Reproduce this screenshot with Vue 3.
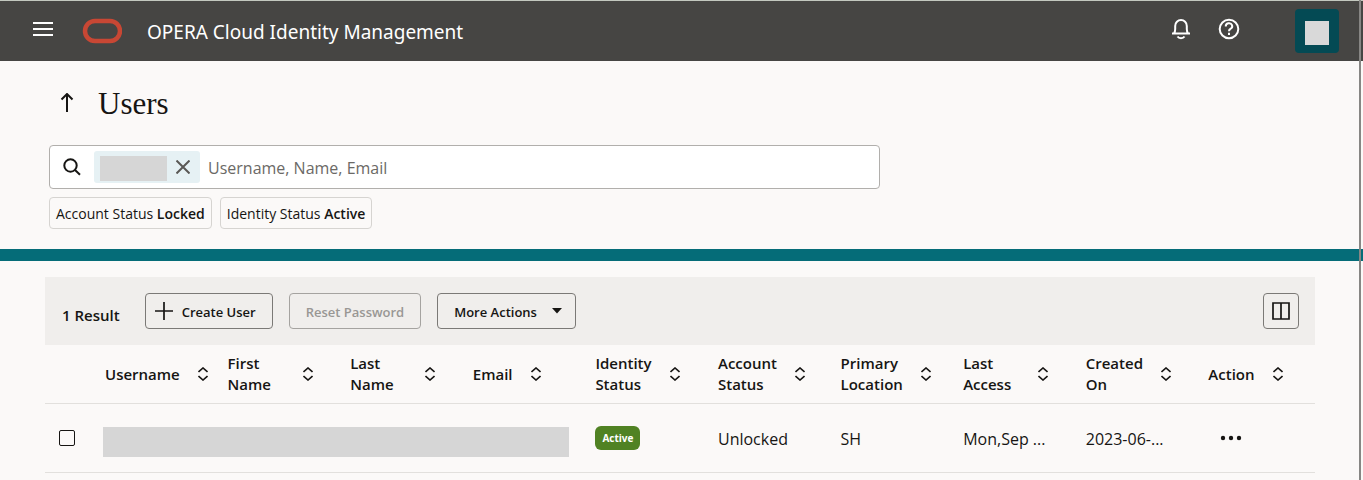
<script setup>
import { ref } from 'vue'

const query = ref('')
const selected = ref(false)

const columns = [
  { label: 'Username' },
  { label: 'First Name', stacked: true },
  { label: 'Last Name', stacked: true },
  { label: 'Email' },
  { label: 'Identity Status', stacked: true },
  { label: 'Account Status', stacked: true },
  { label: 'Primary Location', stacked: true },
  { label: 'Last Access', stacked: true },
  { label: 'Created On', stacked: true },
  { label: 'Action' },
]

const filters = [
  { name: 'Account Status', value: 'Locked' },
  { name: 'Identity Status', value: 'Active' },
]
</script>

<template>
  <div class="page">
    <header class="topbar">
      <button class="icon-btn menu" type="button" aria-label="Open navigation">
        <svg width="22" height="16" viewBox="0 0 22 16" fill="none" stroke="#fff" stroke-width="2">
          <path d="M1 2h20M1 8h20M1 14h20" />
        </svg>
      </button>
      <svg class="logo" width="40" height="26" viewBox="0 0 40 26" fill="none" aria-hidden="true">
        <rect x="3" y="3" width="35" height="20" rx="10" stroke="#c84734" stroke-width="4.5" />
      </svg>
      <span class="product">OPERA Cloud Identity Management</span>
      <button class="icon-btn bell" type="button" aria-label="Notifications">
        <svg width="20" height="22" viewBox="0 0 20 22" fill="none" stroke="#fff" stroke-width="2">
          <path d="M1 15.5h18M3 15.5c1-1.500 1.200-3 1.200-4.500V8a5.800 6 0 0 1 11.600 0v3c0 1.500.2 3 1.200 4.500M6.500 18.500c1.500 2.200 5.500 2.200 7 0" />
        </svg>
      </button>
      <button class="icon-btn help" type="button" aria-label="Help">
        <svg width="22" height="22" viewBox="0 0 22 22" fill="none" stroke="#fff" stroke-width="2">
          <circle cx="11" cy="11" r="9.300" />
          <path d="M7.800 8.500a3.200 3 0 1 1 4.600 2.400c-1 .6-1.400 1-1.400 2.300" />
          <path d="M11 14.800v2.200" />
        </svg>
      </button>
      <button class="avatar" type="button" aria-label="Account"><span></span></button>
    </header>

    <section class="heading">
      <div class="title-row">
        <button class="icon-btn" type="button" aria-label="Back">
          <svg width="14" height="20" viewBox="0 0 14 20" fill="none" stroke="#161513" stroke-width="2">
            <path d="M7 19V1M1.500 6.500L7 1l5.500 5.500" />
          </svg>
        </button>
        <h1>Users</h1>
      </div>
      <div class="search">
        <svg width="18" height="18" viewBox="0 0 18 18" fill="none" stroke="#161513" stroke-width="2" aria-hidden="true">
          <circle cx="7.500" cy="7.500" r="6.200" />
          <path d="M12 12l5 4.800" />
        </svg>
        <span class="token">
          <span class="token-value"></span>
          <button class="icon-btn" type="button" aria-label="Remove filter">
            <svg width="14" height="14" viewBox="0 0 14 14" fill="none" stroke="#5a5855" stroke-width="2">
              <path d="M.5 .5l13 13M13.500 .5L.5 13.500" />
            </svg>
          </button>
        </span>
        <input v-model="query" type="text" aria-label="Search users" placeholder="Username, Name, Email" />
      </div>
      <div class="chips">
        <button v-for="f in filters" :key="f.name" class="chip" type="button">
          {{ f.name }} <b>{{ f.value }}</b>
        </button>
      </div>
    </section>

    <div class="band"></div>

    <main class="content">
      <div class="toolbar">
        <span class="count">1 Result</span>
        <button class="btn create" type="button">
          <svg width="18" height="18" viewBox="0 0 18 18" fill="none" stroke="#161513" stroke-width="1.700" aria-hidden="true">
            <path d="M9 0v18M0 9h18" />
          </svg>
          Create User
        </button>
        <button class="btn" type="button" disabled>Reset Password</button>
        <button class="btn more" type="button">
          More Actions
          <svg width="10" height="6" viewBox="0 0 10 6" aria-hidden="true"><path d="M0 0h10L5 5.500z" fill="#161513" /></svg>
        </button>
        <button class="btn columns" type="button" aria-label="Manage columns">
          <svg width="18" height="18" viewBox="0 0 18 18" fill="none" stroke="#161513" stroke-width="1.700">
            <path d="M1 1h16v16H1zM9 1v16" />
          </svg>
        </button>
      </div>

      <table>
        <thead>
          <tr>
            <td class="check"></td>
            <th v-for="c in columns" :key="c.label" scope="col">
              <div class="head">
                <span :class="{ stacked: c.stacked }">{{ c.label }}</span>
                <button class="icon-btn" type="button" :aria-label="'Sort by ' + c.label">
                  <svg width="10" height="14" viewBox="0 0 10 14" fill="none" stroke="#161513" stroke-width="1.600">
                    <path d="M.5 5L5 1l4.500 4M.5 9L5 13l4.500-4" />
                  </svg>
                </button>
              </div>
            </th>
          </tr>
        </thead>
        <tbody>
          <tr>
            <td class="check"><input v-model="selected" type="checkbox" aria-label="Select user" /></td>
            <td class="masked" colspan="4"><div></div></td>
            <td><span class="badge">Active</span></td>
            <td class="text">Unlocked</td>
            <td class="text">SH</td>
            <td class="text">Mon,Sep ...</td>
            <td class="text">2023-06-...</td>
            <td>
              <button class="icon-btn dots" type="button" aria-label="Row actions">
                <svg width="22" height="6" viewBox="0 0 22 6" fill="#161513">
                  <circle cx="3" cy="3" r="2.200" /><circle cx="11" cy="3" r="2.200" /><circle cx="19" cy="3" r="2.200" />
                </svg>
              </button>
            </td>
          </tr>
        </tbody>
      </table>
    </main>
  </div>
</template>

<style>
body {
  background: #fbf9f8;
}
</style>

<style scoped>
.page {
  position: relative;
  min-height: 100vh;
  font-family: "Open Sans", "Noto Sans", sans-serif;
  font-size: 16px;
  line-height: 21px;
  color: #161513;
}

.page::after {
  content: "";
  position: absolute;
  top: 0;
  right: 2px;
  bottom: 0;
  width: 2px;
  background: #878684;
}

*,
*::before {
  box-sizing: border-box;
}

svg {
  display: block;
  flex: none;
}

button,
input {
  font: inherit;
  color: inherit;
}

.icon-btn {
  display: flex;
  flex: none;
  padding: 0;
  border: 0;
  background: none;
}

.topbar {
  display: flex;
  align-items: center;
  height: 61px;
  padding: 0 24px 0 32px;
  border-top: 1px solid #c3c8bf;
  background: #464543;
}

.menu {
  padding-bottom: 4px;
}

.logo {
  margin-left: 28px;
}

.product {
  flex: 1;
  margin-left: 25px;
  padding-top: 2px;
  font-family: "Noto Sans", "Open Sans", sans-serif;
  font-size: 19px;
  color: #fff;
}

.help {
  margin-left: 27px;
}

.bell,
.help {
  padding-bottom: 4px;
}

.avatar {
  display: grid;
  place-items: center;
  width: 44px;
  height: 44px;
  margin-left: 55px;
  padding: 4px 0 0;
  border: 0;
  border-radius: 4px;
  background: #044a54;
}

.avatar span {
  width: 24px;
  height: 24px;
  background: #d9d9d9;
}

.heading {
  padding: 24px 48px 20px 49px;
}

.title-row {
  display: flex;
  align-items: center;
  gap: 24px;
  padding-left: 11px;
}

h1 {
  margin: 0;
  padding-top: 2px;
  font-family: "Liberation Serif", serif;
  font-size: 31px;
  font-weight: 400;
  line-height: 34px;
}

.search {
  display: flex;
  align-items: center;
  max-width: 831px;
  height: 44px;
  margin-top: 24px;
  padding: 0 13px;
  border: 1px solid #b1afac;
  border-radius: 4px;
  background: #fff;
}

.token {
  display: flex;
  flex: none;
  align-items: center;
  gap: 9px;
  height: 32px;
  margin-left: 13px;
  padding: 0 10px 0 6px;
  border-radius: 3px;
  background: #e6f1f4;
}

.token-value {
  width: 67px;
  height: 25px;
  margin-top: 2px;
  background: #d6d6d6;
}

.search input {
  flex: 1;
  min-width: 0;
  padding: 2px 8px 0;
  border: 0;
  outline: 0;
  background: none;
}

.search input::placeholder {
  color: #6b6966;
  opacity: 1;
}

.chips {
  display: flex;
  gap: 8px;
  margin-top: 8px;
}

.chip {
  height: 32px;
  padding: 0 6px;
  border: 1px solid #d6d4d1;
  border-radius: 4px;
  background: none;
  font-size: 14px;
  white-space: nowrap;
}

.chip b {
  font-weight: 600;
}

.band {
  height: 12px;
  background: #056c78;
}

.content {
  padding: 16px 48px 0 45px;
}

.toolbar {
  display: flex;
  align-items: center;
  gap: 16px;
  height: 68px;
  padding: 0 16px 0 17px;
  background: #f0eeec;
}

.count {
  margin-right: 9px;
  padding-top: 9px;
  font-size: 15px;
  font-weight: 600;
}

.btn {
  display: flex;
  align-items: center;
  height: 36px;
  padding: 2px 16px 0;
  border: 1px solid #7b7976;
  border-radius: 4px;
  background: none;
  font-size: 13px;
  font-weight: 600;
  white-space: nowrap;
}

.btn svg {
  margin-bottom: 2px;
}

.btn:disabled {
  border-color: #a5a3a0;
  color: #999794;
}

.create {
  gap: 9px;
  padding-left: 9px;
}

.more {
  gap: 15px;
  padding-right: 13px;
}

.columns {
  margin-left: auto;
  padding: 2px 8px 0;
}

table {
  width: 100%;
  border-collapse: collapse;
  table-layout: fixed;
}

th,
td {
  padding: 0 0 0 16px;
  border-bottom: 1px solid #e2e0dd;
  text-align: left;
  white-space: nowrap;
}

th {
  height: 58px;
  font-size: 15px;
  font-weight: 600;
}

tbody td {
  height: 69px;
}

tbody .text {
  padding-top: 3px;
}

.check,
tbody .check {
  width: 44px;
  padding-left: 14px;
}

.head {
  display: flex;
  align-items: center;
  gap: 18px;
}

.head span {
  padding-top: 1px;
}

.stacked {
  width: min-content;
  min-width: 57px;
  white-space: normal;
}

input[type="checkbox"] {
  display: block;
  width: 16px;
  height: 16px;
  margin: 0;
  border: 1px solid #161513;
  border-radius: 2px;
  appearance: none;
}

input[type="checkbox"]:checked {
  background: #161513;
}

tbody .masked {
  padding: 0 10px 0 14px;
}

.masked div {
  height: 30px;
  margin-top: 8px;
  background: #d6d6d6;
}

.badge {
  display: inline-block;
  padding: 0 7px;
  border-radius: 6px;
  background: #508223;
  font-size: 10px;
  font-weight: 700;
  line-height: 24px;
  color: #fff;
}

.dots {
  margin-left: 12px;
}
</style>
